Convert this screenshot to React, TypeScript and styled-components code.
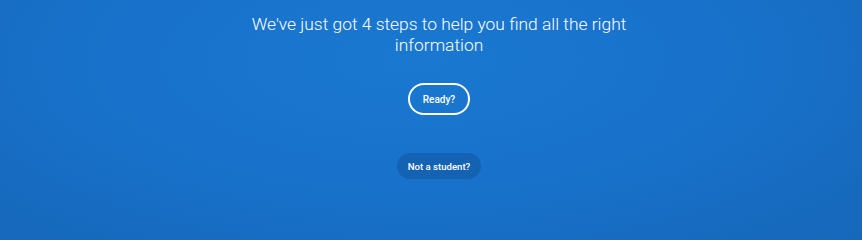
import React from "react"
import styled, { createGlobalStyle } from "styled-components"

const GlobalStyle = createGlobalStyle`
    html, body {
        margin: 0;
        padding: 0;
        background: #1667b9;
    }
    body {
        font-family: Roboto, "Noto Sans", sans-serif;
        -webkit-font-smoothing: antialiased;
    }
`

const Hero = styled.section`
    width: 100%;
    min-height: 100vh;
    box-sizing: border-box;
    padding: 14px 0 0 16px;
    display: flex;
    flex-direction: column;
    align-items: center;
    background: radial-gradient(ellipse 75% 110% at 48% 25%, #1a78d1 0%, #1872cb 45%, #1667b9 100%);
    overflow: hidden;
`

const Title = styled.h1`
    margin: 0;
    max-width: 390px;
    color: #ffffff;
    font-size: 17.4px;
    font-weight: 300;
    line-height: 21px;
    text-align: center;
`

const PillButton = styled.button<{ variant?: "outline" | "ghost" }>`
    border-radius: 999px;
    color: #ffffff;
    font-family: Roboto, "Noto Sans", sans-serif;
    font-weight: 500;
    font-size: 10px;
    cursor: pointer;
    box-sizing: border-box;
    ${({ variant }) =>
        variant === "ghost"
            ? `
        margin-top: 38px;
        height: 26px;
        padding: 0 11px;
        font-size: 9.6px;
        border: none;
        background: rgba(10, 40, 90, 0.22);
    `
            : `
        margin-top: 27px;
        height: 32px;
        padding: 0 13px;
        border: 2px solid #ffffff;
        background: transparent;
    `}
`

export default function App() {
    return (
        <>
            <GlobalStyle />
            <Hero>
                <Title>We've just got 4 steps to help you find all the right information</Title>
                <PillButton>Ready?</PillButton>
                <PillButton variant="ghost">Not a student?</PillButton>
            </Hero>
        </>
    )
}
